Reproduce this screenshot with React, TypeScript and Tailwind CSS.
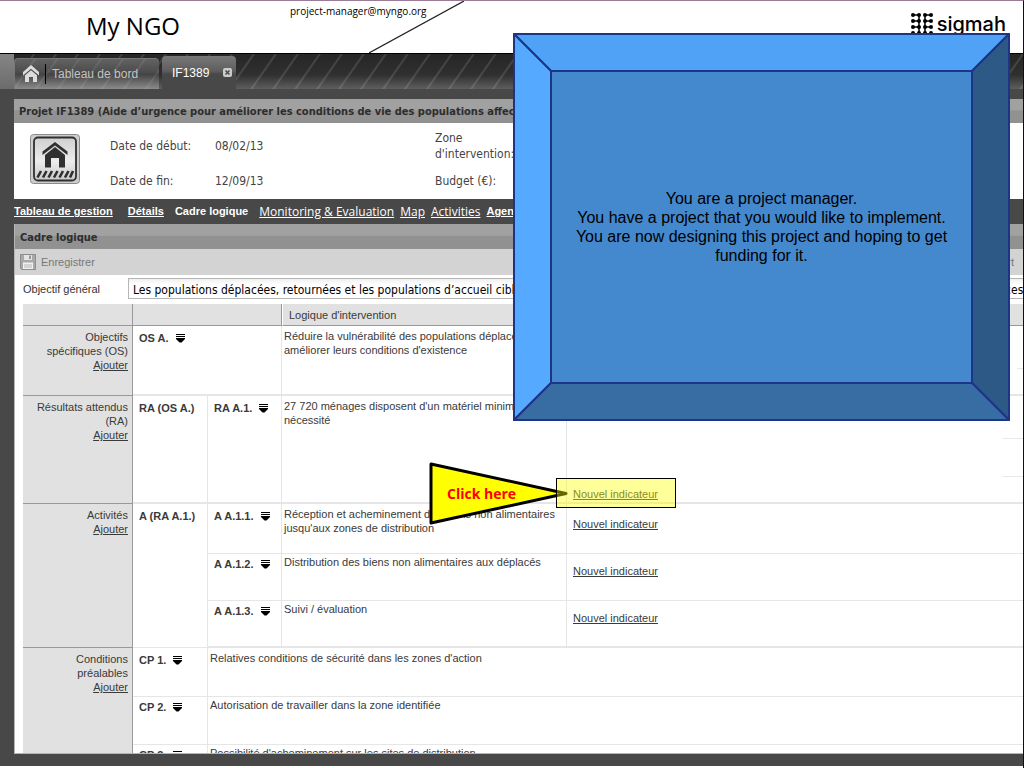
import type { ReactNode } from "react";

const objective =
  "Les populations déplacées, retournées et les populations d’accueil ciblées améliorent leurs anciennes conditions de vie grâce à l’accès aux biens de première nécessité";

function HomeIcon() {
  return (
    <svg className="h-[18px] w-4 shrink-0" viewBox="0 0 16 18" fill="#dcdcdc" aria-hidden="true">
      <path d="M8 0 0 7v3.500L8 3.800l8 6.700V7L8 0Z" />
      <path d="M2 10.200 8 5.200l6 5V17h-4v-5H6v5H2v-6.800Z" />
    </svg>
  );
}

function ProjectIcon() {
  return (
    <svg className="h-[50px] w-[50px] shrink-0" viewBox="0 0 50 50" aria-hidden="true">
      <defs>
        <linearGradient id="tile" x1="0" y1="0" x2="0" y2="1">
          <stop offset="0" stopColor="#cfcfcf" />
          <stop offset=".55" stopColor="#ececec" />
          <stop offset="1" stopColor="#c9c9c9" />
        </linearGradient>
      </defs>
      <rect x=".5" y=".5" width="49" height="49" rx="3" fill="#cdcdcd" stroke="#8b8b8b" />
      <rect x="4" y="3.5" width="42" height="43" rx="4" fill="url(#tile)" stroke="#303030" strokeWidth="1.8" />
      <path d="M25 8 12.5 17.5V21L25 11.5 37.5 21v-3.500L25 8Z" fill="#303030" />
      <path d="M15 21 25 13l10 8V33.500h-6V24h-8v9.500h-6V21Z" fill="#303030" />
      <path
        d="M7.500 43.500l3.500-6.500M13 43.500l3.500-6.500M18.500 43.500l3.500-6.500M24 43.500l3.500-6.500M29.500 43.500l3.500-6.500M35 43.500l3.500-6.500M40 43.500l3-6.500"
        stroke="#303030"
        strokeWidth="2.600"
      />
    </svg>
  );
}

function SaveIcon() {
  return (
    <svg className="h-4 w-4 shrink-0" viewBox="0 0 16 16" aria-hidden="true">
      <path d="M.5.5h15v15H1.500l-1-1V.5Z" fill="#a9a9a9" stroke="#8d8d8d" />
      <rect x="4" y="1" width="8" height="5" fill="#e4e4e4" />
      <rect x="9" y="1.500" width="2" height="3.500" fill="#999" />
      <rect x="3" y="8.500" width="10" height="6.500" fill="#f0f0f0" />
      <path d="M4 11h8M4 13h8" stroke="#b5b5b5" />
    </svg>
  );
}

function SigmahMark() {
  const points = [2, 8, 14, 20];
  return (
    <svg className="h-[22px] w-[22px] shrink-0" viewBox="0 0 22 22" aria-hidden="true">
      <path d="M2 2h6M14 2h6M2 8h6M14 8h6M2 14h6M14 14h6M8 2v18M14 2v18" stroke="#000" strokeWidth="1.500" />
      {points.map((y) => points.map((x) => <circle key={`${x}-${y}`} cx={x} cy={y} r="2" />))}
    </svg>
  );
}

function MenuButton() {
  return (
    <button type="button" aria-label="Menu" className="ml-[7px] inline-block align-[-1px]">
      <svg className="block h-[9px] w-[9px]" viewBox="0 0 9 9" aria-hidden="true">
        <path d="M0 .5h9M0 2.500h9" stroke="#000" />
        <path d="M0 4h9v1L5.500 8.500h-2L0 5V4Z" />
      </svg>
    </button>
  );
}

function Section({ title, rows }: { title: string; rows?: number }) {
  return (
    <th
      scope="rowgroup"
      rowSpan={rows}
      className="border-r border-b border-[#999] bg-[#e1e1e1] pt-1 pr-1 pl-3 text-right align-top font-normal"
    >
      {title}
      <br />
      <a href="#ajouter" className="underline">
        Ajouter
      </a>
    </th>
  );
}

type CodeProps = { children: ReactNode; menu?: boolean; tight?: boolean; span?: number; rows?: number };

function Code({ children, menu = true, tight = false, span, rows }: CodeProps) {
  return (
    <td
      colSpan={span}
      rowSpan={rows}
      className={`border-r border-b border-[#e6e6e6] pl-1.5 align-top font-bold whitespace-nowrap ${tight ? "pt-[3px]" : "pt-[5px]"}`}
    >
      {children}
      {menu && <MenuButton />}
    </td>
  );
}

function Text({ children, tight = false, wide = false }: { children: ReactNode; tight?: boolean; wide?: boolean }) {
  return (
    <td
      colSpan={wide ? 3 : 1}
      className={`border-b border-[#e6e6e6] pl-0.5 align-top whitespace-nowrap ${wide ? "" : "border-r"} ${tight ? "pt-px" : "pt-[3px]"}`}
    >
      {children}
    </td>
  );
}

function Indicator() {
  return (
    <a href="#indicateur" className="ml-1.5 underline">
      Nouvel indicateur
    </a>
  );
}

function LogFrame() {
  return (
    <table className="ml-2 w-[calc(100%-8px)] table-fixed border-separate border-spacing-0 text-[11px] leading-[14px] text-[#3a3a3a]">
      <colgroup>
        <col className="w-[110px]" />
        <col className="w-[75px]" />
        <col className="w-[74px]" />
        <col className="w-[285px]" />
        <col />
      </colgroup>
      <thead>
        <tr className="h-[22px] bg-[#e1e1e1] text-left">
          <td className="border-r border-b border-[#999]" />
          <td colSpan={2} className="border-r border-b border-[#999]" />
          <th scope="col" className="border-b border-l border-b-[#999] border-l-white pl-1.5 font-normal">
            Logique d'intervention
          </th>
          <td className="border-b border-l border-b-[#999] border-l-white" />
        </tr>
      </thead>
      <tbody className="[&>tr:last-child>td]:border-b-2">
        <tr className="h-[70px]">
          <Section title="Objectifs spécifiques (OS)" />
          <Code span={2}>OS A.</Code>
          <Text>
            Réduire la vulnérabilité des populations déplacées et
            <br />
            améliorer leurs conditions d'existence
          </Text>
          <td className="border-b border-[#e6e6e6] align-top">
            <div className="ml-auto h-[43px] w-1.5 border-b border-[#e9e9e9]" />
          </td>
        </tr>
      </tbody>
      <tbody className="[&>tr:last-child>td]:border-b-2">
        <tr className="h-[108px]">
          <Section title="Résultats attendus (RA)" />
          <Code menu={false}>RA (OS A.)</Code>
          <Code>RA A.1.</Code>
          <Text>
            27 720 ménages disposent d'un matériel minimum de première
            <br />
            nécessité
          </Text>
          <td className="border-b border-[#e6e6e6] align-top">
            <div className="ml-auto h-[43px] w-[21px] border-b border-[#e9e9e9]" />
            <div className="mb-2.5 ml-auto h-[38px] w-[21px] border-b border-[#e9e9e9]" />
            <Indicator />
          </td>
        </tr>
      </tbody>
      <tbody className="[&>tr:last-child>td]:border-b-2">
        <tr className="h-[50px]">
          <Section title="Activités" rows={3} />
          <Code menu={false} rows={3}>
            A (RA A.1.)
          </Code>
          <Code>A A.1.1.</Code>
          <Text>
            Réception et acheminement des biens non alimentaires
            <br />
            jusqu'aux zones de distribution
          </Text>
          <td className="border-b border-[#e6e6e6] pt-[13px] align-top">
            <Indicator />
          </td>
        </tr>
        <tr className="h-[47px]">
          <Code tight>A A.1.2.</Code>
          <Text tight>Distribution des biens non alimentaires aux déplacés</Text>
          <td className="border-b border-[#e6e6e6] pt-2.5 align-top">
            <Indicator />
          </td>
        </tr>
        <tr className="h-[47px]">
          <Code tight>A A.1.3.</Code>
          <Text tight>Suivi / évaluation</Text>
          <td className="border-b border-[#e6e6e6] pt-2.5 align-top">
            <Indicator />
          </td>
        </tr>
      </tbody>
      <tbody>
        <tr className="h-[49px]">
          <Section title="Conditions préalables" rows={3} />
          <Code>CP 1.</Code>
          <Text wide>Relatives conditions de sécurité dans les zones d'action</Text>
        </tr>
        <tr className="h-12">
          <Code tight>CP 2.</Code>
          <Text wide tight>
            Autorisation de travailler dans la zone identifiée
          </Text>
        </tr>
        <tr className="h-12">
          <Code tight>CP 3.</Code>
          <Text wide tight>
            Possibilité d'acheminement sur les sites de distribution
          </Text>
        </tr>
      </tbody>
    </table>
  );
}

function Message() {
  return (
    <aside className="absolute top-8 left-[513px] flex h-[388px] w-[497px] items-center justify-center">
      <svg className="absolute inset-0 h-full w-full" viewBox="0 0 497 388" stroke="#1c3587" strokeWidth="2" strokeLinejoin="round" aria-hidden="true">
        <path d="M1 1h495l-37 37H38Z" fill="#4fa2f6" />
        <path d="M1 1v386l37-37V38Z" fill="#55a9ff" />
        <path d="M496 1v386l-37-37V38Z" fill="#2c5985" />
        <path d="M1 387h495l-37-37H38Z" fill="#386da4" />
        <path d="M38 38h421v312H38Z" fill="#4488cd" />
      </svg>
      <p className="relative w-[384px] text-center text-base leading-[19px] text-black">
        You are a project manager.
        <br />
        You have a project that you would like to implement.
        <br />
        You are now designing this project and hoping to get funding for it.
      </p>
    </aside>
  );
}

function Callout() {
  return (
    <>
      <div className="absolute top-[461px] left-[429px] flex h-[63px] w-[140px] items-center pl-[18px]">
        <svg className="absolute inset-0 h-full w-full" viewBox="0 0 140 63" aria-hidden="true">
          <path d="M2 2 137 31.500 2 61Z" fill="#ff0" stroke="#000" strokeWidth="3" strokeLinejoin="round" />
        </svg>
        <strong className="relative font-['Comic_Sans_MS','Open_Sans',sans-serif] text-sm font-bold text-[#f00]">Click here</strong>
      </div>
      <div className="pointer-events-none absolute top-[477px] left-[556px] h-[30px] w-[120px] border border-black bg-[#ff0]/40" />
    </>
  );
}

export default function App() {
  const tahoma = "font-['DejaVu_Sans_Condensed','DejaVu_Sans',sans-serif]";
  const comic = "font-['Comic_Sans_MS','Open_Sans',sans-serif]";
  return (
    <div className="relative flex h-screen flex-col overflow-hidden border-t border-r border-t-[#9b7b96] border-r-[#26001f] bg-white pb-0.5 font-['Liberation_Sans',sans-serif]">
      <header className="relative flex h-[53px] shrink-0 items-start border-b border-black bg-white text-black">
        <h1 className={`${comic} ml-[86px] w-[204px] pt-[7px] text-2xl leading-9`}>My NGO</h1>
        <span className={`${comic} pt-0.5 text-[10px] leading-4`}>project-manager@myngo.org</span>
        <svg className="absolute top-0 left-[369px] h-[52px] w-[95px]" viewBox="0 0 95 52" aria-hidden="true">
          <path d="M0 52 95 0" stroke="#222" strokeWidth="1.200" />
        </svg>
        <div className="mt-3 mr-[17px] ml-auto flex items-start gap-1">
          <SigmahMark />
          <span className="font-['Inter',sans-serif] text-[20px] leading-[22px] font-medium">sigmah</span>
        </div>
      </header>

      <div className="flex h-[35px] shrink-0 bg-gradient-to-b from-[#858585] to-[#6c6c6c] pl-3.5">
        <nav className="flex flex-1 items-end gap-[3px] bg-[repeating-linear-gradient(125deg,rgba(255,255,255,0)_0px,rgba(255,255,255,0)_15px,rgba(255,255,255,0.12)_16px,rgba(255,255,255,0.12)_17px,rgba(255,255,255,0)_18px),linear-gradient(#262626,#303030_60%,#5e5e5e)]">
          <a
            href="#bord"
            className="flex h-[31px] w-[145px] items-center rounded-t border-t border-l border-[#777] bg-[repeating-linear-gradient(125deg,rgba(255,255,255,0)_0px,rgba(255,255,255,0)_15px,rgba(255,255,255,0.08)_16px,rgba(255,255,255,0.08)_17px,rgba(255,255,255,0)_18px),linear-gradient(#626262,#4c4c4c_45%,#424242_50%,#8b8b8b)] pl-2 text-xs text-[#c4c4c4]"
          >
            <HomeIcon />
            <span className="ml-1.5 flex h-5 items-center border-l border-black pl-1.5">Tableau de bord</span>
          </a>
          <div className="flex h-[33px] w-[74px] items-center justify-between rounded-t bg-[linear-gradient(#787878,#5e5e5e_45%,#484848_55%,#484848)] pr-1 pl-2.5 text-xs text-white">
            <a href="#if1389">IF1389</a>
            <button type="button" aria-label="Fermer">
              <svg className="block h-[9px] w-[9px]" viewBox="0 0 9 9" aria-hidden="true">
                <rect width="9" height="9" rx="2" fill="#ccc" />
                <path d="m2.500 2.500 4 4m0-4-4 4" stroke="#484848" strokeWidth="1.500" />
              </svg>
            </button>
          </div>
        </nav>
      </div>

      <main className="flex min-h-0 flex-1 flex-col bg-[#484848] pt-2.5 pb-3 pl-3.5">
        <h2 className={`${tahoma} h-6 shrink-0 overflow-hidden bg-[linear-gradient(#a1a1a1_45%,#919191_50%)] pl-[5px] text-[11px] leading-[26px] font-bold whitespace-nowrap text-[#2d2d2d]`}>
          Projet IF1389 (Aide d’urgence pour améliorer les conditions de vie des populations affectées)
        </h2>

        <section className={`${tahoma} flex h-[76px] shrink-0 bg-white pt-[11px] pl-4 text-xs leading-4 text-[#444]`}>
          <ProjectIcon />
          <dl className="ml-[30px] grid grid-cols-[105px_220px_100px] grid-rows-[32px_auto] gap-y-[7px]">
            <dt className="pt-1">Date de début:</dt>
            <dd className="pt-1">08/02/13</dd>
            <dt className="-mt-1">
              Zone
              <br />
              d'intervention:
            </dt>
            <dt>Date de fin:</dt>
            <dd>12/09/13</dd>
            <dt>Budget (€):</dt>
          </dl>
        </section>

        <nav className="flex h-[25px] shrink-0 items-center overflow-hidden text-[11px] font-bold whitespace-nowrap text-white">
          <a href="#gestion" className="mr-[15px] underline">
            Tableau de gestion
          </a>
          <a href="#details" className="mr-[11px] underline">
            Détails
          </a>
          <span className="mr-[11px]">Cadre logique</span>
          <a href="#me" className={`${comic} mr-1.5 text-xs font-normal underline`}>
            Monitoring &amp; Evaluation
          </a>
          <a href="#map" className={`${comic} mr-1.5 text-xs font-normal underline`}>
            Map
          </a>
          <a href="#activities" className={`${comic} mr-1.5 text-xs font-normal underline`}>
            Activities
          </a>
          <a href="#agenda" className="underline">
            Agenda
          </a>
        </nav>

        <section className="flex min-h-0 flex-1 flex-col overflow-hidden border-b border-l border-[#b5b5b5] bg-white">
          <h3 className={`${tahoma} h-[25px] shrink-0 bg-[linear-gradient(#a1a1a1_45%,#919191_50%)] pl-[5px] text-[11px] leading-[28px] font-bold text-[#2d2d2d]`}>
            Cadre logique
          </h3>
          <div className="flex h-[26px] shrink-0 items-center justify-between bg-[#d3d3d3] pr-[9px] pl-[5px] text-[11px] text-[#777]">
            <button type="button" className="flex items-center gap-[5px]">
              <SaveIcon />
              Enregistrer
            </button>
            <button type="button">Export</button>
          </div>
          <div className="mt-[3px] mb-[5px] flex shrink-0 items-center pl-2">
            <label htmlFor="objectif" className="w-[105px] pt-0.5 text-[11px] text-[#333]">
              Objectif général
            </label>
            <input
              id="objectif"
              defaultValue={objective}
              className={`${tahoma} h-[21px] min-w-0 flex-1 border border-r-0 border-[#b5b5b5] bg-gradient-to-b from-[#f0f0f0] to-white to-30% pt-[3px] pl-1 text-xs text-black`}
            />
          </div>
          <LogFrame />
        </section>
      </main>

      <Message />
      <Callout />
    </div>
  );
}
